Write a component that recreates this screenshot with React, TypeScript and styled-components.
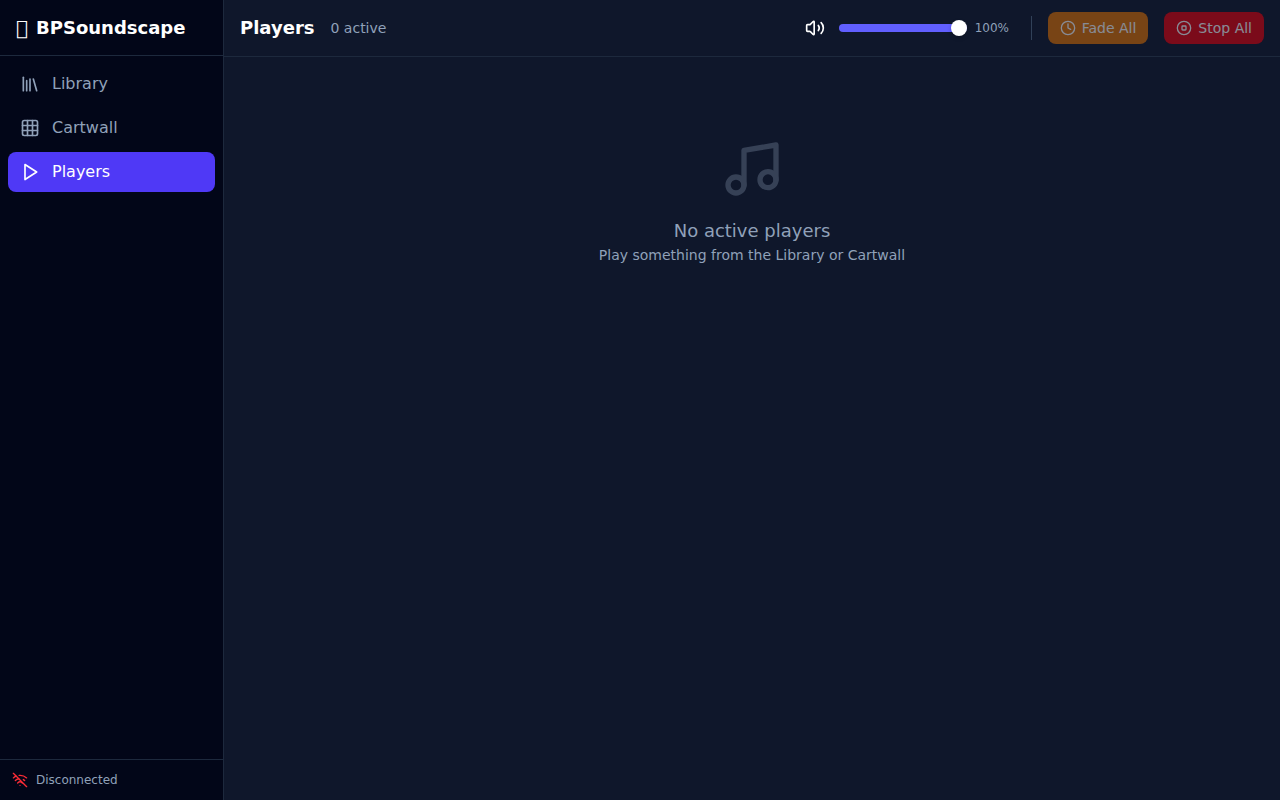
import React, { useState } from "react";
import styled, { createGlobalStyle } from "styled-components";
import { CircleStop, Clock, Grid3x3, Library, Music, Volume2, WifiOff } from "lucide-react";

const GlobalStyle = createGlobalStyle`
  *, *::before, *::after { box-sizing: border-box; }
  body {
    margin: 0;
    background: #0f172b;
    color: #fff;
    font-family: "DejaVu Sans", sans-serif;
    font-size: 16px;
    line-height: 24px;
  }
  h1, h2, p { margin: 0; }
  svg { display: block; flex-shrink: 0; }
`;

const Shell = styled.div`
  display: flex;
  min-height: 100vh;
`;

const Sidebar = styled.aside`
  display: flex;
  flex-direction: column;
  width: 224px;
  flex-shrink: 0;
  background: #020618;
  border-right: 1px solid #1d293d;
`;

const Brand = styled.h1`
  display: flex;
  align-items: center;
  gap: 8px;
  height: 56px;
  padding: 0 16px;
  border-bottom: 1px solid #1d293d;
  font-size: 18px;
  line-height: 28px;
  font-weight: 700;
`;

const BrandMark = styled.span`
  font-size: 20px;
  font-weight: 400;
`;

const Nav = styled.nav`
  display: flex;
  flex: 1;
  flex-direction: column;
  gap: 4px;
  padding: 8px;
`;

const NavLink = styled.a<{ $active?: boolean }>`
  display: flex;
  align-items: center;
  gap: 12px;
  padding: 8px 12px;
  border-radius: 8px;
  background: ${(p) => (p.$active ? "#4f39f6" : "transparent")};
  color: ${(p) => (p.$active ? "#fff" : "#90a1b9")};
  text-decoration: none;
`;

const Status = styled.footer`
  display: flex;
  align-items: center;
  gap: 8px;
  padding: 12px;
  border-top: 1px solid #1d293d;
  color: #90a1b9;
  font-size: 12px;
  line-height: 16px;

  svg { color: #fb2c36; }
`;

const Main = styled.main`
  flex: 1;
  min-width: 0;
`;

const Toolbar = styled.header`
  display: flex;
  align-items: center;
  justify-content: space-between;
  padding: 12px 16px;
  border-bottom: 1px solid #1d293d;
`;

const Group = styled.div`
  display: flex;
  align-items: center;
  gap: 16px;
`;

const Title = styled.h2`
  font-size: 18px;
  line-height: 28px;
  font-weight: 700;
`;

const Count = styled.span`
  color: #90a1b9;
  font-size: 14px;
  line-height: 20px;
`;

const Volume = styled.div`
  display: flex;
  align-items: center;
  gap: 8px;
`;

const MuteButton = styled.button`
  padding: 6px;
  border: 0;
  border-radius: 6px;
  background: transparent;
  color: #fff;
`;

const Slider = styled.input`
  appearance: none;
  width: 128px;
  height: 16px;
  margin: 0;
  background: transparent;

  &::-webkit-slider-runnable-track {
    height: 8px;
    border-radius: 4px;
    background: linear-gradient(#615fff, #615fff) left / var(--level) 100% no-repeat #314158;
  }

  &::-webkit-slider-thumb {
    appearance: none;
    width: 16px;
    height: 16px;
    margin-top: -4px;
    border-radius: 50%;
    background: #fff;
    box-shadow: 0 2px 4px rgba(0, 0, 0, 0.2);
  }
`;

const Level = styled.output`
  width: 40px;
  color: #90a1b9;
  font-size: 12px;
  line-height: 16px;
`;

const Divider = styled.span`
  width: 1px;
  height: 24px;
  background: #314158;
`;

const ActionButton = styled.button<{ $color: string }>`
  display: flex;
  align-items: center;
  gap: 6px;
  height: 32px;
  padding: 0 12px;
  border: 0;
  border-radius: 8px;
  background: ${(p) => p.$color};
  color: #fff;
  font: 14px/20px "DejaVu Sans", sans-serif;

  &:disabled { opacity: 0.5; }
`;

const Empty = styled.section`
  display: flex;
  flex-direction: column;
  align-items: center;
  padding: 80px 16px;
  color: #90a1b9;
  text-align: center;

  svg {
    margin-bottom: 16px;
    opacity: 0.3;
  }
`;

const EmptyTitle = styled.p`
  font-size: 18px;
  line-height: 28px;
`;

const EmptyHint = styled.p`
  font-size: 14px;
  line-height: 20px;
`;

const PlayIcon = () => (
  <svg width="20" height="20" viewBox="0 0 24 24" fill="none" stroke="currentColor" strokeWidth="2" strokeLinecap="round" strokeLinejoin="round" aria-hidden="true">
    <polygon points="6 3 20 12 6 21 6 3" />
  </svg>
);

export default function App() {
  const [volume, setVolume] = useState(100);

  return (
    <>
      <GlobalStyle />
      <Shell>
        <Sidebar>
          <Brand>
            <BrandMark aria-hidden="true">{"\u{F0000}"}</BrandMark>
            <span>BPSoundscape</span>
          </Brand>
          <Nav>
            <NavLink href="#library"><Library size={20} />Library</NavLink>
            <NavLink href="#cartwall"><Grid3x3 size={20} />Cartwall</NavLink>
            <NavLink href="#players" $active aria-current="page"><PlayIcon />Players</NavLink>
          </Nav>
          <Status><WifiOff size={16} />Disconnected</Status>
        </Sidebar>
        <Main>
          <Toolbar>
            <Group>
              <Title>Players</Title>
              <Count>0 active</Count>
            </Group>
            <Group>
              <Volume>
                <MuteButton aria-label="Mute"><Volume2 size={20} /></MuteButton>
                <Slider
                  type="range"
                  min={0}
                  max={100}
                  value={volume}
                  aria-label="Master volume"
                  onChange={(e) => setVolume(Number(e.target.value))}
                  style={{ "--level": `${volume}%` } as React.CSSProperties}
                />
                <Level>{volume}%</Level>
              </Volume>
              <Divider />
              <ActionButton $color="#e17100" disabled><Clock size={16} />Fade All</ActionButton>
              <ActionButton $color="#e7000b" disabled><CircleStop size={16} />Stop All</ActionButton>
            </Group>
          </Toolbar>
          <Empty>
            <Music size={64} />
            <EmptyTitle>No active players</EmptyTitle>
            <EmptyHint>Play something from the Library or Cartwall</EmptyHint>
          </Empty>
        </Main>
      </Shell>
    </>
  );
}
